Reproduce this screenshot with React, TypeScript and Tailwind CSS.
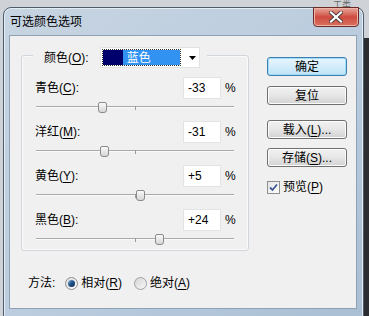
import React from "react";

const FONT = { fontFamily: '"Liberation Sans", "Noto Sans CJK SC", sans-serif' };

type Row = { name: string; key: string; value: number };
const rows: Row[] = [
  { name: "青色", key: "C", value: -33 },
  { name: "洋红", key: "M", value: -31 },
  { name: "黄色", key: "Y", value: 5 },
  { name: "黑色", key: "B", value: 24 },
];

function Label({ name, k }: { name: string; k: string }) {
  return (
    <span className="whitespace-nowrap">
      {name}(<u className="underline-offset-2">{k}</u>):
    </span>
  );
}

function SliderRow({ row }: { row: Row }) {
  const text = row.value > 0 ? `+${row.value}` : `${row.value}`;
  return (
    <div className="flex flex-col">
      <div className="flex items-center h-[22px] pl-[13px] pr-[9px]">
        <div className="flex-1">
          <Label name={row.name} k={row.key} />
        </div>
        <div className="w-[38px] h-[22px] bg-white border border-[#e2e3e4] flex items-center pl-[4px] text-[12px]">
          {text}
        </div>
        <span className="ml-[4px] w-[14px] text-[12px]">%</span>
      </div>
      <div className="relative h-[22px] ml-[14px] w-[198px]">
        <div className="absolute left-0 right-0 top-[7px] h-[1px] bg-[#a9a9a9]" />
        <div className="absolute left-0 right-0 top-[8px] h-[1px] bg-[#fbfbfb]" />
        <div className="absolute left-[99px] top-[7px] w-[1px] h-[4px] bg-[#9a9a9a]" />
        <div
          className="absolute top-[3px] w-[9px] h-[11px] rounded-t-[2px] rounded-b-[3px] border border-[#8b8b8b] bg-gradient-to-b from-[#fafafa] to-[#d6d6d6]"
          style={{ left: 99 + row.value - 4 }}
        />
      </div>
    </div>
  );
}

function Button({ children, primary }: { children: React.ReactNode; primary?: boolean }) {
  return (
    <div
      className={
        "w-[80px] h-[19px] rounded-[3px] border flex items-center justify-center text-[12px] " +
        (primary
          ? "border-[#3c7fb1] bg-gradient-to-b from-[#e8f6fd] to-[#bfe3f7] shadow-[inset_0_0_0_1px_#9fdcf9]"
          : "border-[#707070] bg-gradient-to-b from-[#f2f2f2] via-[#e6e6e6] to-[#d2d2d2] shadow-[inset_0_0_0_1px_#fcfcfc]")
      }
    >
      {children}
    </div>
  );
}

export default function App() {
  return (
    <div className="relative w-[369px] h-[316px] overflow-hidden bg-[#cfd3d7] pt-[7px]" style={FONT}>
      {/* desktop behind */}
      <div className="absolute right-0 top-[38px] w-[5px] h-[280px] bg-[#2b2d30]" />
      <div className="absolute left-[333px] top-0 text-[9px] leading-[10px] text-[#6a6a6a]">工类</div>

      {/* window */}
      <div className="relative ml-[3px] w-[361px] h-[312px] border border-[#4e5d6e] rounded-t-[8px] rounded-b-[4px] bg-gradient-to-br from-[#c7d4e1] via-[#bccddf] to-[#aabfd4] shadow-[inset_0_0_0_1px_#e4ecf4]">
        {/* close button */}
        <div className="absolute right-[4px] top-[-1px] w-[46px] h-[20px] rounded-b-[4px] border border-[#6b2b25] bg-gradient-to-b from-[#e5a69c] via-[#cf4a3f] to-[#d8705f] flex items-center justify-center shadow-[inset_0_0_0_1px_#f0b5aa]">
          <svg width="14" height="12" viewBox="0 0 14 12">
            <path d="M2 1.5 L12 10.5 M12 1.5 L2 10.5" stroke="#4a3a3a" strokeWidth="4" strokeLinecap="square" />
            <path d="M2 1.5 L12 10.5 M12 1.5 L2 10.5" stroke="#ffffff" strokeWidth="2.2" strokeLinecap="square" />
          </svg>
        </div>

        {/* title */}
        <div className="h-[27px] flex items-center pl-[6px] text-[12px] text-black">可选颜色选项</div>

        {/* client */}
        <div className="ml-[5px] w-[348px] h-[274px] border border-[#8fa2b5] bg-[#f0f0f0] text-[12px] text-black">
          <div className="flex">
            {/* group box */}
            <div className="relative ml-[11px] mt-[19px] w-[228px] h-[196px] border border-[#d0d6dc] rounded-[3px] shadow-[inset_0_0_0_1px_#fafafa]">
              <div className="absolute left-[11px] top-[-9px] pl-[11px] pr-[7px] bg-[#f0f0f0] flex items-center">
                <Label name="颜色" k="O" />
                <div className="ml-[11px] w-[100px] h-[21px] bg-white border border-[#e3e3e3] flex items-center pl-[1px]">
                  <div className="flex h-[17px] w-[79px] border border-dotted border-[#333]">
                    <div className="w-[20px] h-full bg-[#00006c]" />
                    <div className="flex-1 bg-[#3292f2] text-white flex items-center pl-[4px] text-[12px]">
                      蓝色
                    </div>
                  </div>
                  <svg className="ml-[8px]" width="7" height="4" viewBox="0 0 7 4">
                    <path d="M0 0 H7 L3.5 4 Z" fill="#000" />
                  </svg>
                </div>
              </div>
              <div className="pt-[21px] flex flex-col">
                {rows.map((r) => (
                  <SliderRow key={r.key} row={r} />
                ))}
              </div>
            </div>

            {/* right column */}
            <div className="ml-[18px] mt-[21px] flex flex-col">
              <Button primary>确定</Button>
              <div className="mt-[10px]">
                <Button>复位</Button>
              </div>
              <div className="mt-[15px]">
                <Button>
                  载入(<u className="underline-offset-2">L</u>)...
                </Button>
              </div>
              <div className="mt-[9px]">
                <Button>
                  存储(<u className="underline-offset-2">S</u>)...
                </Button>
              </div>
              <div className="mt-[11px] flex items-center">
                <div className="w-[13px] h-[13px] border border-[#8e8f8f] bg-gradient-to-br from-[#e6e6e6] to-[#fdfdfd] flex items-center justify-center">
                  <svg width="9" height="9" viewBox="0 0 9 9">
                    <path d="M1 4.5 L3.5 7 L8 1.5" stroke="#3d5a96" strokeWidth="1.8" fill="none" />
                  </svg>
                </div>
                <span className="ml-[3px]">
                  预览(<u className="underline-offset-2">P</u>)
                </span>
              </div>
            </div>
          </div>

          {/* method row */}
          <div className="mt-[24px] pl-[18px] flex items-center h-[16px]">
            <span>方法:</span>
            <div className="ml-[10px] w-[13px] h-[13px] rounded-full border border-[#8e8f8f] bg-gradient-to-br from-[#dcdcdc] to-[#fbfbfb] flex items-center justify-center">
              <div className="w-[7px] h-[7px] rounded-full bg-gradient-to-br from-[#7fb4e0] via-[#1f4f86] to-[#0d2f5c]" />
            </div>
            <span className="ml-[3px]">
              相对(<u className="underline-offset-2">R</u>)
            </span>
            <div className="ml-[12px] w-[13px] h-[13px] rounded-full border border-[#a0a0a0] bg-gradient-to-br from-[#d4d4d4] to-[#f8f8f8]" />
            <span className="ml-[3px]">
              绝对(<u className="underline-offset-2">A</u>)
            </span>
          </div>
        </div>
      </div>
    </div>
  );
}
